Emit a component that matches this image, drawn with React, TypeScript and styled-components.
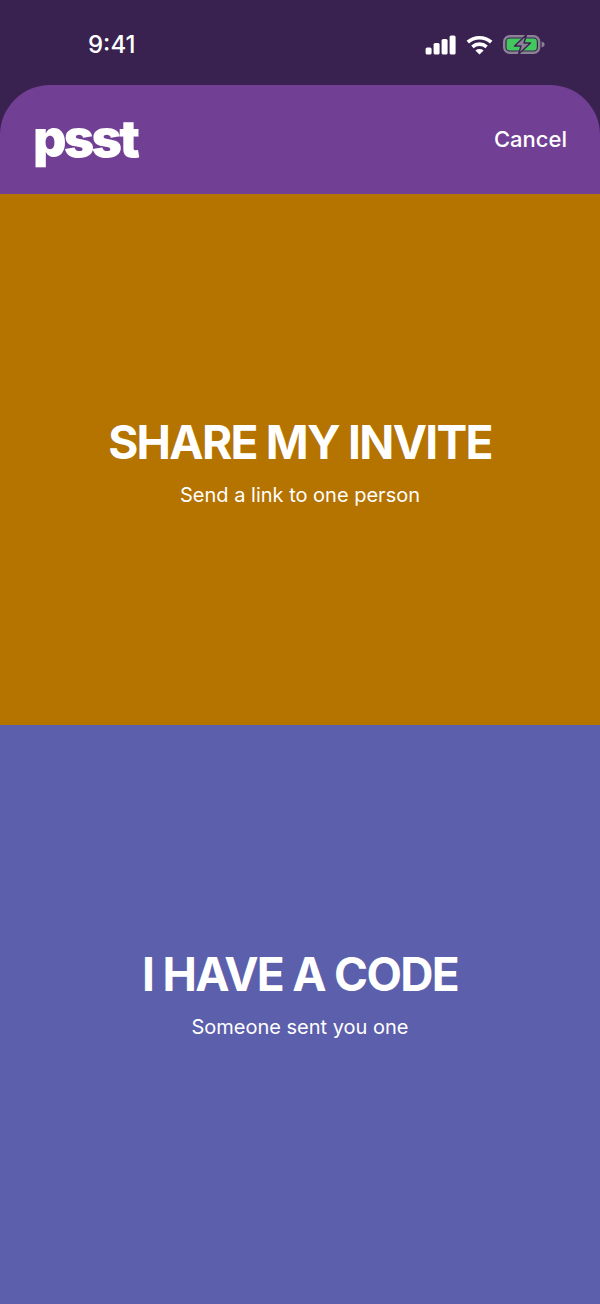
import React from "react";
import styled, { createGlobalStyle } from "styled-components";

const GlobalStyle = createGlobalStyle`
  html, body {
    margin: 0;
    padding: 0;
    background: #3a2250;
    font-family: Inter, "Liberation Sans", sans-serif;
    color: #fff;
  }
`;

const Signal = () => (
  <svg width="31" height="20" viewBox="0 0 31 20">
    <rect x="0.6" y="12.5" width="6" height="7" rx="1.6" fill="#fff" />
    <rect x="8.6" y="8" width="6" height="11.5" rx="1.6" fill="#fff" />
    <rect x="16.6" y="4" width="6" height="15.5" rx="1.6" fill="#fff" />
    <rect x="24.6" y="0.5" width="6" height="19" rx="1.6" fill="#fff" />
  </svg>
);

const Wifi = () => (
  <svg width="27" height="20" viewBox="0 0 27 20" fill="none">
    <path d="M1.8 7.2C8.4 1.2 18.6 1.2 25.2 7.2" stroke="#fff" strokeWidth="3.6" />
    <path d="M6.4 11.8C10.6 8.2 16.4 8.2 20.6 11.8" stroke="#fff" strokeWidth="3.6" />
    <path d="M13.5 19.6L9.4 15.4C11.8 13.6 15.2 13.6 17.6 15.4Z" fill="#fff" />
  </svg>
);

const Battery = () => (
  <svg width="42" height="21" viewBox="0 0 42 21" fill="none">
    <rect x="1.2" y="2.2" width="35" height="16.6" rx="5.5" stroke="#8b8296" strokeWidth="2.4" />
    <rect x="3.6" y="4.6" width="30.2" height="11.8" rx="3.2" fill="#43c85e" />
    <path d="M38.6 7.5c1.8.4 3 1.6 3 3s-1.2 2.6-3 3z" fill="#8b8296" />
    <path
      d="M23.5 0.8L11.5 12h6.5l-2.5 8.2L27.5 9H21z"
      fill="#8b8296"
      stroke="#3a2250"
      strokeWidth="1.4"
      strokeLinejoin="round"
    />
  </svg>
);

const Page = styled.div`
  width: 600px;
  height: 1304px;
  display: flex;
  flex-direction: column;
  overflow: hidden;
`;

const StatusBar = styled.div`
  height: 85px;
  box-sizing: border-box;
  padding: 30px 55px 0 88px;
  display: flex;
  justify-content: space-between;
  align-items: flex-start;
`;

const Clock = styled.span`
  font-size: 24px;
  line-height: 29px;
  font-weight: 500;
`;

const StatusIcons = styled.div`
  display: flex;
  align-items: center;
  gap: 10px;
  height: 29px;
`;

const Header = styled.header`
  height: 109px;
  box-sizing: border-box;
  background: #713f94;
  border-radius: 50px 50px 0 0;
  padding: 0 33px 0 33px;
  display: flex;
  justify-content: space-between;
  align-items: center;
`;

const Logo = styled.span`
  font-size: 52px;
  line-height: 60px;
  font-weight: 900;
  letter-spacing: -2.8px;
  position: relative;
  top: -1px;
`;

const CancelButton = styled.button`
  background: none;
  border: 0;
  padding: 0;
  color: #fff;
  font-family: inherit;
  font-size: 22px;
  font-weight: 500;
  line-height: 29px;
`;

const Choice = styled.button<{ $bg: string; $size: number; $tail?: number }>`
  flex: 0 0 ${(p) => p.$size}px;
  box-sizing: border-box;
  border: 0;
  padding: 2px 0 ${(p) => p.$tail ?? 0}px;
  background: ${(p) => p.$bg};
  color: #fff;
  font-family: inherit;
  display: flex;
  flex-direction: column;
  align-items: center;
  justify-content: center;
  gap: 13px;
`;

const ChoiceTitle = styled.span`
  font-size: 46px;
  line-height: 56px;
  font-weight: 700;
  letter-spacing: -1.7px;
`;

const ChoiceHint = styled.span`
  font-size: 20px;
  line-height: 24px;
  font-weight: 400;
`;

export default function App() {
  return (
    <Page>
      <GlobalStyle />
      <StatusBar>
        <Clock>9:41</Clock>
        <StatusIcons>
          <Signal />
          <Wifi />
          <Battery />
        </StatusIcons>
      </StatusBar>
      <Header>
        <Logo>psst</Logo>
        <CancelButton>Cancel</CancelButton>
      </Header>
      <Choice $bg="#b57300" $size={531}>
        <ChoiceTitle>SHARE MY INVITE</ChoiceTitle>
        <ChoiceHint>Send a link to one person</ChoiceHint>
      </Choice>
      <Choice $bg="#5c5fab" $size={579} $tail={46}>
        <ChoiceTitle>I HAVE A CODE</ChoiceTitle>
        <ChoiceHint>Someone sent you one</ChoiceHint>
      </Choice>
    </Page>
  );
}
